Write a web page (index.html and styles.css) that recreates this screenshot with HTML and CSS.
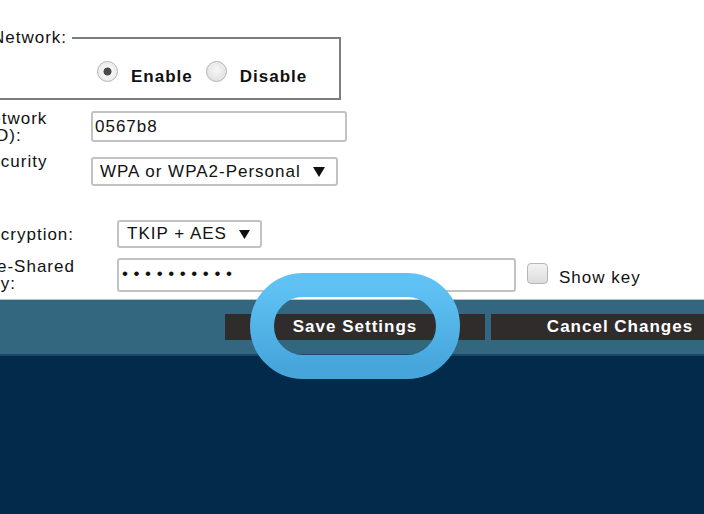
FILE: index.html
```html
<!DOCTYPE html>
<html lang="en">
<head>
<meta charset="utf-8">
<title>Wireless Settings</title>
<link rel="stylesheet" href="styles.css">
</head>
<body>
<div class="screen">
  <div class="panel">
    <fieldset class="net">
      <legend>Network:</legend>
      <div class="radios">
        <label class="opt"><input type="radio" name="net" checked><span>Enable</span></label>
        <label class="opt"><input type="radio" name="net"><span>Disable</span></label>
      </div>
    </fieldset>

    <div class="form">
      <div class="row r-ssid">
        <div class="lbl">Network<span class="l2">(SSID):</span></div>
        <input class="txt ssid" type="text" value="0567b8">
      </div>
      <div class="row r-sec">
        <div class="lbl">Security</div>
        <div class="sel sec"><span>WPA or WPA2-Personal</span><svg class="arr" width="12" height="10" viewBox="0 0 12 10"><polygon points="0,0 12,0 6,10" fill="#111"/></svg></div>
      </div>
      <div class="row wide r-enc">
        <div class="lbl">Encryption:</div>
        <div class="sel enc"><span>TKIP + AES</span><svg class="arr" width="11" height="9" viewBox="0 0 11 9"><polygon points="0,0 11,0 5.5,9" fill="#111"/></svg></div>
      </div>
      <div class="row wide r-key">
        <div class="lbl">Pre-Shared<br>Key:</div>
        <div class="keyctl">
          <input class="txt pw" type="password" value="abcdefghij">
          <input class="cb" type="checkbox" id="showkey">
          <label class="showtxt" for="showkey">Show key</label>
        </div>
      </div>
    </div>
  </div>

  <div class="bar">
    <button class="btn save">Save Settings</button>
    <button class="btn cancel">Cancel Changes</button>
  </div>

  <svg class="ring" width="210" height="106" viewBox="0 0 210 106">
    <defs>
      <linearGradient id="rg" x1="0" y1="0" x2="0" y2="1">
        <stop offset="0" stop-color="#60c2f4"/>
        <stop offset="1" stop-color="#46a6dc"/>
      </linearGradient>
    </defs>
    <rect x="12" y="12" width="186" height="82" rx="41" ry="41" fill="none" stroke="url(#rg)" stroke-width="24"/>
  </svg>
</div>
</body>
</html>
```

FILE: styles.css
```css
html, body {
  margin: 0;
  padding: 0;
}

body {
  width: 704px;
  height: 514px;
  overflow: hidden;
  background: #022a4b;
  font-family: "Liberation Sans", Arial, sans-serif;
  font-size: 17px;
  letter-spacing: 1px;
  color: #111;
}

.screen {
  position: relative;
  width: 704px;
  height: 514px;
  overflow: hidden;
}

.panel {
  background: #fff;
  height: 299px;
  padding-top: 28px;
  box-sizing: border-box;
}

/* Network fieldset */
.net {
  margin: 0 0 0 -30px;
  width: 371px;
  box-sizing: border-box;
  border: 2px solid #7d7d7d;
  padding: 12px 0 14px 0;
  min-width: 0;
}

.net legend {
  margin-left: 17px;
  padding: 0 5px 0 3px;
  line-height: 20px;
}

.radios {
  display: flex;
  align-items: flex-start;
  padding-left: 125px;
  height: 24px;
}

.opt {
  display: flex;
  align-items: flex-start;
  gap: 13px;
  font-weight: bold;
  margin-right: 13px;
}

.opt span {
  line-height: 17px;
  margin-top: 8px;
}

.opt input {
  appearance: none;
  -webkit-appearance: none;
  width: 21px;
  height: 21px;
  margin: 1px 0 0 0;
  border-radius: 50%;
  border: 1px solid #b4b4b4;
  background: radial-gradient(circle at 50% 40%, #f7f7f7 0, #dadada 100%);
  box-sizing: border-box;
}

.opt input:checked {
  background: radial-gradient(circle, #4a4a4a 0 3.6px, #f6f6f6 4.4px, #ececec 70%, #d8d8d8 100%);
}

/* Form rows */
.form {
  margin-left: -22px;
  display: flex;
  flex-direction: column;
}

.row {
  display: grid;
  grid-template-columns: 113px auto;
  align-items: start;
}

.row.wide {
  grid-template-columns: 139px auto;
}

.lbl {
  line-height: 17px;
  white-space: nowrap;
}

.lbl .l2 {
  display: block;
  margin-left: -19px;
}

.r-ssid { margin-top: 10px; }
.r-sec { margin-top: 9px; }
.r-enc { margin-top: 34px; align-items: center; }
.r-key { margin-top: 10px; }

.txt {
  font: inherit;
  letter-spacing: inherit;
  color: #111;
  box-sizing: border-box;
  border: 2px solid #c2c2c2;
  border-radius: 3px;
  background: #fff;
  margin: 0;
  outline: none;
}

.ssid {
  width: 256px;
  height: 31px;
  margin-top: 1px;
  padding: 0 2px;
}

.sel {
  display: flex;
  align-items: center;
  justify-content: space-between;
  box-sizing: border-box;
  border: 2px solid #c2c2c2;
  border-radius: 3px;
  background: #fff;
  white-space: nowrap;
}

.sec {
  width: 247px;
  height: 29px;
  margin-top: 4px;
  padding: 1px 11px 0 7px;
}

.enc {
  width: 145px;
  height: 28px;
  padding: 0 10px 0 8px;
}

.arr {
  display: block;
  flex: none;
}

.keyctl {
  display: flex;
  align-items: flex-start;
}

.pw {
  width: 399px;
  height: 34px;
  padding: 0 3px 3px 3px;
  letter-spacing: 5.6px;
}

.cb {
  appearance: none;
  -webkit-appearance: none;
  width: 21px;
  height: 21px;
  margin: 5px 0 0 11px;
  border: 1px solid #b6b6b6;
  border-radius: 4px;
  background: linear-gradient(#f3f3f3, #dcdcdc);
  box-sizing: border-box;
}

.showtxt {
  margin: 11px 0 0 11px;
  line-height: 17px;
  white-space: nowrap;
}

/* Button bar */
.bar {
  display: flex;
  gap: 6px;
  padding: 14px 0 14px 225px;
  background: #33667f;
  border-top: 1px solid #b8c6ce;
  border-bottom: 2px solid #1d4664;
}

.btn {
  flex: none;
  height: 26px;
  padding: 0;
  border: none;
  background: #2f2c2b;
  color: #fff;
  font: bold 17px "Liberation Sans", Arial, sans-serif;
  letter-spacing: 1px;
  text-align: center;
  white-space: nowrap;
}

.save { width: 260px; }
.cancel { width: 258px; }

/* Highlight annotation */
.ring {
  position: absolute;
  left: 250px;
  top: 273px;
  display: block;
}
```
